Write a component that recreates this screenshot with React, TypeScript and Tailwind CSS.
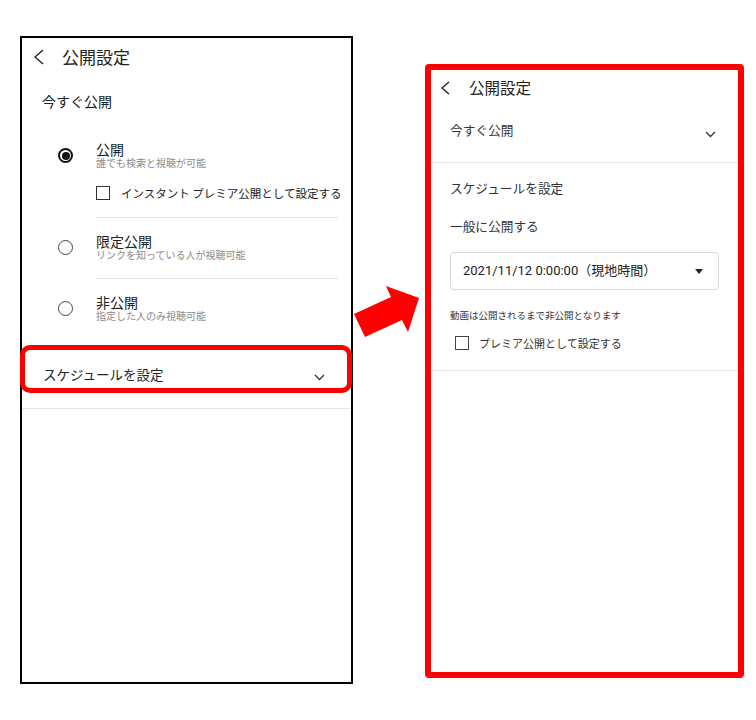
const jp = { fontFamily: '"Noto Sans CJK JP", "Noto Sans", sans-serif' };

const BackIcon = ({ w, h }: { w: number; h: number }) => (
  <svg width={w} height={h} viewBox={`0 0 ${w} ${h}`} fill="none">
    <polyline
      points={`${w - 1},1 1,${h / 2} ${w - 1},${h - 1}`}
      stroke="#222"
      strokeWidth="1.4"
    />
  </svg>
);

const ChevronDown = () => (
  <svg width="11" height="7" viewBox="0 0 11 7" fill="none">
    <polyline points="1,1 5.5,5.5 10,1" stroke="#333" strokeWidth="1.3" />
  </svg>
);

const Radio = ({ checked }: { checked?: boolean }) =>
  checked ? (
    <div className="w-[15px] h-[15px] rounded-full border-2 border-[#111] flex items-center justify-center">
      <div className="w-[8px] h-[8px] rounded-full bg-[#111]" />
    </div>
  ) : (
    <div className="w-[15px] h-[15px] rounded-full border-[1.5px] border-[#444]" />
  );

interface OptionProps {
  title: string;
  sub: string;
  checked?: boolean;
  children?: React.ReactNode;
  divider?: boolean;
}

const Option = ({ title, sub, checked, children, divider }: OptionProps) => (
  <div className="flex pl-[36px]">
    <div className="mt-[22px]">
      <Radio checked={checked} />
    </div>
    <div className="flex-1 ml-[23px] pt-[15px]">
      <div className="text-[14px] leading-[16px] text-[#222]">{title}</div>
      <div className="text-[10px] leading-[12px] text-[#8a8a8a]">{sub}</div>
      {children}
      {divider && <div className="mt-[17px] mr-[13px] h-px bg-[#e6e6e6]" />}
    </div>
  </div>
);

const LeftPanel = () => (
  <div className="ml-[20px] mt-[36px] w-[333px] h-[648px] border-2 border-black bg-white" style={jp}>
    <div className="h-[37px] flex items-center pl-[12px]">
      <BackIcon w={10} h={16} />
      <span className="ml-[18px] text-[17px] text-[#222]">公開設定</span>
    </div>
    <div className="h-[52px] flex items-center pl-[20px] text-[14px] text-[#222]">今すぐ公開</div>
    <div className="-mt-px">
      <Option title="公開" sub="誰でも検索と視聴が可能" checked divider>
        <div className="mt-[17px] h-[14px] flex items-center">
          <div className="w-[14px] h-[14px] border-[1.5px] border-[#333]" />
          <span className="ml-[11px] text-[11.5px] leading-[14px] text-[#222] whitespace-nowrap">
            インスタント プレミア公開として設定する
          </span>
        </div>
      </Option>
    </div>
    <Option title="限定公開" sub="リンクを知っている人が視聴可能" divider />
    <Option title="非公開" sub="指定した人のみ視聴可能" />
    <div className="relative mt-[19px] h-[68px] border-b border-[#e6e6e6] flex items-center justify-between pl-[21px] pr-[26px]">
      <span className="text-[13.5px] text-[#222]">スケジュールを設定</span>
      <div className="mt-[5px]">
        <ChevronDown />
      </div>
      <div className="absolute top-[4px] -left-[2px] w-[332px] h-[48px] border-[5px] border-[#ff0000] rounded-[10px]" />
    </div>
  </div>
);

const Arrow = () => (
  <svg className="mt-[280px] shrink-0" width="72" height="60" viewBox="0 0 72 60">
    <polygon points="1,34 38,17 33,6 66,18 55,52 49,40 12,57" fill="#ff0000" />
  </svg>
);

const RightPanel = () => (
  <div className="mt-[64px] w-[319px] h-[614px] border-[6px] border-[#ff0000] rounded-[4px] bg-white" style={jp}>
    <div className="h-[36px] flex items-center pl-[10px]">
      <BackIcon w={9} h={14} />
      <span className="ml-[19px] text-[15.5px] text-[#222]">公開設定</span>
    </div>
    <div className="h-[57px] border-b border-[#e6e6e6] flex items-start justify-between pt-[15px] pl-[19px] pr-[22px]">
      <span className="text-[12.7px] leading-[18px] text-[#333]">今すぐ公開</span>
      <div className="mt-[10px]">
        <ChevronDown />
      </div>
    </div>
    <div className="pl-[19px] pr-[19px]">
      <div className="mt-[16px] text-[12.7px] leading-[18px] text-[#333]">スケジュールを設定</div>
      <div className="mt-[20px] text-[12.7px] leading-[18px] text-[#333]">一般に公開する</div>
      <div className="mt-[17px] h-[38px] border border-[#d9d9d9] rounded-[4px] flex items-center justify-between pl-[12px] pr-[15px]">
        <span
          className="text-[13px] text-[#222]"
          style={{ fontFamily: 'Roboto, "Noto Sans CJK JP", sans-serif' }}
        >
          2021/11/12 0:00:00（現地時間）
        </span>
        <svg width="8" height="5" viewBox="0 0 8 5">
          <polygon points="0,0 8,0 4,5" fill="#222" />
        </svg>
      </div>
      <div className="mt-[19px] text-[9.5px] leading-[12px] text-[#333]">動画は公開されるまで非公開となります</div>
      <div className="mt-[15px] h-[14px] flex items-center pl-[5px]">
        <div className="w-[14px] h-[14px] border-[1.5px] border-[#444]" />
        <span className="ml-[10px] text-[11px] leading-[14px] text-[#333]">プレミア公開として設定する</span>
      </div>
    </div>
    <div className="mt-[20px] h-px bg-[#e6e6e6]" />
  </div>
);

const App = () => {
  return (
    <div className="w-[756px] h-[720px] bg-white flex items-start">
      <LeftPanel />
      <Arrow />
      <RightPanel />
    </div>
  );
};

export default App;
